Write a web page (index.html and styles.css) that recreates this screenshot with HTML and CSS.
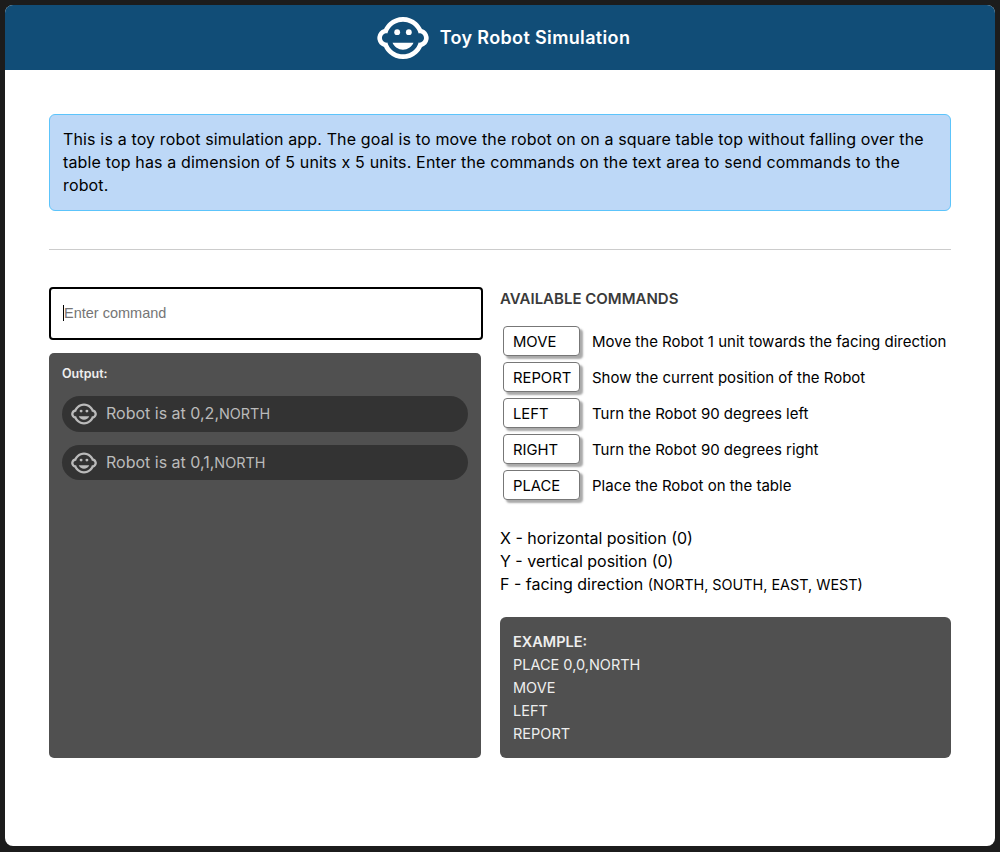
FILE: index.html
```html
<!DOCTYPE html>
<html lang="en">
<head>
  <meta charset="UTF-8">
  <meta name="viewport" content="width=device-width, initial-scale=1.0">
  <title>Toy Robot Simulation</title>
  <link rel="stylesheet" href="styles.css">
</head>
<body>
  <div class="app">
    <header class="header">
      <svg class="header-icon" viewBox="0 0 24 24"><circle cx="14.5" cy="9.5" r="1.25"/><circle cx="9.5" cy="9.5" r="1.25"/><path d="M22.94 12.66c.04-.21.06-.43.06-.66s-.02-.45-.06-.66c-.25-1.51-1.36-2.74-2.81-3.17-.53-1.12-1.28-2.1-2.19-2.91C16.36 3.85 14.28 3 12 3s-4.36.85-5.94 2.26c-.92.81-1.67 1.8-2.19 2.91-1.45.43-2.56 1.65-2.81 3.17-.04.21-.06.43-.06.66s.02.45.06.66c.25 1.51 1.36 2.74 2.81 3.17.52 1.11 1.27 2.09 2.17 2.89C7.62 20.14 9.71 21 12 21s4.38-.86 5.97-2.28c.9-.8 1.65-1.79 2.17-2.89 1.44-.43 2.55-1.65 2.8-3.17zM19 14c-.1 0-.19-.02-.29-.03-.2.67-.49 1.29-.86 1.86C16.6 17.74 14.45 19 12 19s-4.6-1.26-5.85-3.17c-.37-.57-.66-1.19-.86-1.86-.1.01-.19.03-.29.03-1.1 0-2-.9-2-2s.9-2 2-2c.1 0 .19.02.29.03.2-.67.49-1.29.86-1.86C7.4 6.26 9.55 5 12 5s4.6 1.26 5.85 3.17c.37.57.66 1.19.86 1.86.1-.01.19-.03.29-.03 1.1 0 2 .9 2 2s-.9 2-2 2zM7.5 14c.76 1.77 2.49 3 4.5 3s3.74-1.23 4.5-3h-9z"/></svg>
      <h1 class="header-title">Toy Robot Simulation</h1>
    </header>

    <main class="content">
      <p class="notice">This is a toy robot simulation app. The goal is to move the robot on on a square table top without falling over the table top has a dimension of 5 units x 5 units. Enter the commands on the text area to send commands to the robot.</p>
      <hr class="divider">

      <div class="columns">
        <section class="left">
          <div class="input-wrap">
            <input class="command-input" type="text" placeholder="Enter command">
            <span class="caret"></span>
          </div>
          <div class="output">
            <div class="output-label">Output:</div>
            <div class="output-row">
              <svg class="row-icon" viewBox="0 0 24 24"><circle cx="14.5" cy="9.5" r="1.25"/><circle cx="9.5" cy="9.5" r="1.25"/><path d="M22.94 12.66c.04-.21.06-.43.06-.66s-.02-.45-.06-.66c-.25-1.51-1.36-2.74-2.81-3.17-.53-1.12-1.28-2.1-2.19-2.91C16.36 3.85 14.28 3 12 3s-4.36.85-5.94 2.26c-.92.81-1.67 1.8-2.19 2.91-1.45.43-2.56 1.65-2.81 3.17-.04.21-.06.43-.06.66s.02.45.06.66c.25 1.51 1.36 2.74 2.81 3.17.52 1.11 1.27 2.09 2.17 2.89C7.62 20.14 9.71 21 12 21s4.38-.86 5.97-2.28c.9-.8 1.65-1.79 2.17-2.89 1.44-.43 2.55-1.65 2.8-3.17zM19 14c-.1 0-.19-.02-.29-.03-.2.67-.49 1.29-.86 1.86C16.6 17.74 14.45 19 12 19s-4.6-1.26-5.85-3.17c-.37-.57-.66-1.19-.86-1.86-.1.01-.19.03-.29.03-1.1 0-2-.9-2-2s.9-2 2-2c.1 0 .19.02.29.03.2-.67.49-1.29.86-1.86C7.4 6.26 9.55 5 12 5s4.6 1.26 5.85 3.17c.37.57.66 1.19.86 1.86.1-.01.19-.03.29-.03 1.1 0 2 .9 2 2s-.9 2-2 2zM7.5 14c.76 1.77 2.49 3 4.5 3s3.74-1.23 4.5-3h-9z"/></svg>
              <span class="row-text">Robot is at 0,2,<span class="caps">NORTH</span></span>
            </div>
            <div class="output-row">
              <svg class="row-icon" viewBox="0 0 24 24"><circle cx="14.5" cy="9.5" r="1.25"/><circle cx="9.5" cy="9.5" r="1.25"/><path d="M22.94 12.66c.04-.21.06-.43.06-.66s-.02-.45-.06-.66c-.25-1.51-1.36-2.74-2.81-3.17-.53-1.12-1.28-2.1-2.19-2.91C16.36 3.85 14.28 3 12 3s-4.36.85-5.94 2.26c-.92.81-1.67 1.8-2.19 2.91-1.45.43-2.56 1.65-2.81 3.17-.04.21-.06.43-.06.66s.02.45.06.66c.25 1.51 1.36 2.74 2.81 3.17.52 1.11 1.27 2.09 2.17 2.89C7.62 20.14 9.71 21 12 21s4.38-.86 5.97-2.28c.9-.8 1.65-1.79 2.17-2.89 1.44-.43 2.55-1.65 2.8-3.17zM19 14c-.1 0-.19-.02-.29-.03-.2.67-.49 1.29-.86 1.86C16.6 17.74 14.45 19 12 19s-4.6-1.26-5.85-3.17c-.37-.57-.66-1.19-.86-1.86-.1.01-.19.03-.29.03-1.1 0-2-.9-2-2s.9-2 2-2c.1 0 .19.02.29.03.2-.67.49-1.29.86-1.86C7.4 6.26 9.55 5 12 5s4.6 1.26 5.85 3.17c.37.57.66 1.19.86 1.86.1-.01.19-.03.29-.03 1.1 0 2 .9 2 2s-.9 2-2 2zM7.5 14c.76 1.77 2.49 3 4.5 3s3.74-1.23 4.5-3h-9z"/></svg>
              <span class="row-text">Robot is at 0,1,<span class="caps">NORTH</span></span>
            </div>
          </div>
        </section>

        <section class="right">
          <h2 class="commands-title">AVAILABLE COMMANDS</h2>
          <div class="commands">
            <div class="command"><button class="command-btn">MOVE</button><span>Move the Robot 1 unit towards the facing direction</span></div>
            <div class="command"><button class="command-btn">REPORT</button><span>Show the current position of the Robot</span></div>
            <div class="command"><button class="command-btn">LEFT</button><span>Turn the Robot 90 degrees left</span></div>
            <div class="command"><button class="command-btn">RIGHT</button><span>Turn the Robot 90 degrees right</span></div>
            <div class="command"><button class="command-btn">PLACE</button><span>Place the Robot on the table</span></div>
          </div>
          <div class="legend">
            <div>X - horizontal position (0)</div>
            <div>Y - vertical position (0)</div>
            <div>F - facing direction <span class="caps">(NORTH, SOUTH, EAST, WEST)</span></div>
          </div>
          <div class="example">
            <div class="example-title">EXAMPLE:</div>
            <div>PLACE 0,0,NORTH</div>
            <div>MOVE</div>
            <div>LEFT</div>
            <div>REPORT</div>
          </div>
        </section>
      </div>
    </main>
  </div>
</body>
</html>
```

FILE: styles.css
```css
body {
  margin: 0;
  background-color: #1c1c1c;
  font-family: Inter, "Liberation Sans", sans-serif;
  color: #000;
}
.app {
  margin: 5px 5px 0;
  height: 841px;
  background-color: #fff;
  border-radius: 8px;
  overflow: hidden;
}
.header {
  height: 65px;
  background-color: #114d77;
  display: flex;
  align-items: center;
  justify-content: center;
  gap: 9px;
  padding-left: 5px;
}
.header-icon {
  width: 56px;
  height: 56px;
  fill: #fff;
}
.header-title {
  margin: 0;
  font-size: 18px;
  font-weight: 600;
  letter-spacing: 0.35px;
  color: #fff;
}
.content {
  padding: 44px 44px 0;
}
.notice {
  margin: 0;
  padding: 13px;
  background-color: #bdd8f7;
  border: 1px solid #5cc4fb;
  border-radius: 6px;
  font-size: 16px;
  line-height: 23px;
  letter-spacing: 0.15px;
}
.divider {
  margin: 38px 0 37px;
  border: none;
  border-top: 1px solid #ccc;
}
.columns {
  display: flex;
  gap: 17px;
}
.left {
  width: 434px;
}
.right {
  flex: 1;
}
.input-wrap {
  position: relative;
}
.command-input {
  display: block;
  width: 100%;
  height: 53px;
  box-sizing: border-box;
  padding: 0 13px 2px;
  border: 2px solid #000;
  border-radius: 4px;
  outline: none;
  font-family: "Liberation Sans", Arial, sans-serif;
  font-size: 14.5px;
}
.caret {
  position: absolute;
  left: 14px;
  top: 18px;
  width: 1px;
  height: 16px;
  background-color: #000;
}
.output {
  width: 432px;
  height: 405px;
  box-sizing: border-box;
  margin-top: 13px;
  padding: 14px 13px 13px;
  background-color: #505050;
  border-radius: 5px;
}
.output-label {
  font-size: 12.5px;
  font-weight: 600;
  line-height: 14px;
  color: #eee;
  margin-bottom: 15px;
}
.output-row {
  height: 36px;
  margin-bottom: 13px;
  padding-left: 8px;
  display: flex;
  align-items: center;
  gap: 8px;
  background-color: #333;
  border-radius: 18px;
  font-size: 16px;
  color: #bbb;
}
.output-row + .output-row {
  height: 35px;
}
.row-icon {
  width: 28px;
  height: 28px;
  fill: #bbb;
}
.row-text {
  padding-bottom: 2px;
}
.caps {
  font-size: 0.9em;
}
.commands-title {
  margin: 0;
  padding-top: 2px;
  font-size: 15px;
  font-weight: 600;
  line-height: 20px;
  color: #3a3a3a;
}
.commands {
  margin-top: 17px;
  display: flex;
  flex-direction: column;
  gap: 6px;
}
.command {
  display: flex;
  align-items: center;
  gap: 12px;
  padding-left: 3px;
  font-size: 15px;
}
.command-btn {
  width: 77px;
  height: 30px;
  padding: 2px 0 0 9px;
  text-align: left;
  background-color: #fff;
  border: 1px solid #777;
  border-radius: 4px;
  box-shadow: 3px 3px 2px #aaa;
  font-family: inherit;
  font-size: 14.8px;
  color: #000;
}
.legend {
  margin-top: 27px;
  font-size: 16px;
  line-height: 23px;
}
.example {
  margin-top: 21px;
  padding: 13px;
  height: 141px;
  box-sizing: border-box;
  background-color: #505050;
  border-radius: 6px;
  font-size: 14.5px;
  line-height: 23px;
  color: #eee;
}
.example-title {
  font-weight: 600;
}
```
